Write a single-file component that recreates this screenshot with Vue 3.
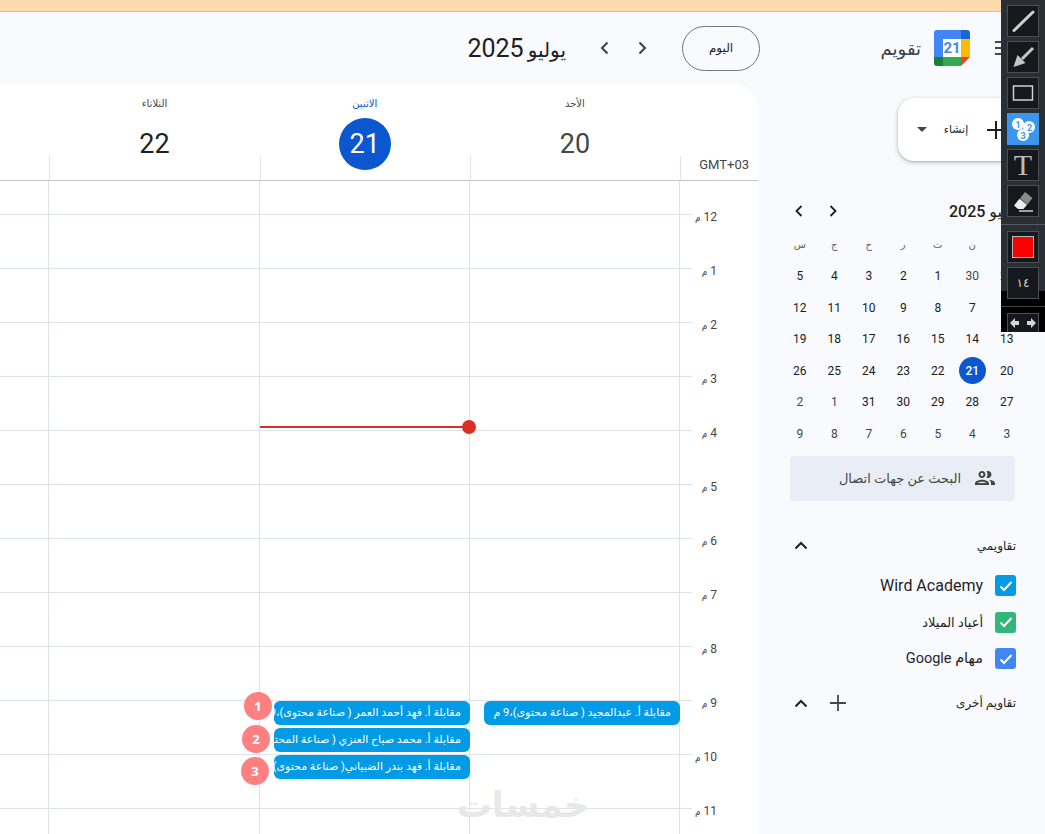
<script setup>
const hours = [12,1,2,3,4,5,6,7,8,9,10,11]
const days = [
  { label: 'الأحد', num: 20, events: [{ text: 'مقابلة أ. عبدالمجيد ( صناعة محتوى)،9 م', top: 520 }] },
  { label: 'الاثنين', num: 21, current: true, now: true, events: [
    { text: 'مقابلة أ. فهد أحمد العمر ( صناعة محتوى)،9 م', top: 520 },
    { text: 'مقابلة أ. محمد صباح العنزي ( صناعة المحتوى)،9:30 م', top: 547 },
    { text: 'مقابلة أ. فهد بندر الضبياني( صناعة محتوى)،10 م', top: 574 }
  ] },
  { label: 'الثلاثاء', num: 22, events: [] },
  { label: 'الأربعاء', num: 23, events: [] }
]
const weekHead = ['ح','ن','ث','ر','خ','ج','س']
const cells = [
  [29,1],[30,1],[1],[2],[3],[4],[5],
  [6],[7],[8],[9],[10],[11],[12],
  [13],[14],[15],[16],[17],[18],[19],
  [20],[21,0,1],[22],[23],[24],[25],[26],
  [27],[28],[29],[30],[31],[1,1],[2,1],
  [3,1],[4,1],[5,1],[6,1],[7,1],[8,1],[9,1]
].map(([n, muted, sel]) => ({ n, muted, sel }))
const calendars = [
  { name: 'Wird Academy', color: '#039be5', size: 16 },
  { name: 'أعياد الميلاد', color: '#33b679', size: 13 },
  { name: 'مهام Google', color: '#4285f4', size: 14.5 }
]
const badges = [
  { n: 1, x: 244, y: 692 },
  { n: 2, x: 242, y: 725 },
  { n: 3, x: 241, y: 757 }
]
</script>

<template>
  <div class="page" dir="rtl">
    <div class="banner"></div>

    <header class="topbar">
      <svg class="burger" width="16" height="14" viewBox="0 0 16 14"><path d="M0 1h16M0 7h16M0 13h16" stroke="#444746" stroke-width="2"/></svg>
      <svg class="logo" width="36" height="36" viewBox="0 0 36 36">
        <path d="M3 0h24v9H9v18H0V3a3 3 0 0 1 3-3z" fill="#4285f4"/>
        <path d="M27 0h6a3 3 0 0 1 3 3v6h-9z" fill="#1967d2"/>
        <path d="M27 9h9v18h-9z" fill="#fbbc04"/>
        <path d="M9 27h18v9H9z" fill="#34a853"/>
        <path d="M0 27h9v9H3a3 3 0 0 1-3-3z" fill="#188038"/>
        <path d="M27 27h9l-9 9z" fill="#ea4335"/>
        <path d="M9 9h18v18H9z" fill="#fff"/>
        <text x="18" y="23" text-anchor="middle" class="logo-num">21</text>
      </svg>
      <div class="app-name">تقويم</div>
      <button class="today-btn">اليوم</button>
      <svg class="nav-chev" width="12" height="14" viewBox="0 0 12 14"><path d="M3.500 1.500 9 7l-5.500 5.500" fill="none" stroke="#3c4043" stroke-width="2"/></svg>
      <svg class="nav-chev" width="12" height="14" viewBox="0 0 12 14"><path d="M8.500 1.500 3 7l5.500 5.500" fill="none" stroke="#3c4043" stroke-width="2"/></svg>
      <div class="period"><span class="period-month">يوليو</span> <span class="period-year">2025</span></div>
    </header>

    <div class="workspace">
      <aside class="side">
        <button class="create">
          <svg class="plus" width="18" height="18" viewBox="0 0 18 18"><path d="M9 0v18M0 9h18" stroke="#1f1f1f" stroke-width="2"/></svg>
          <span class="create-text">إنشاء</span>
          <span class="caret"></span>
        </button>

        <div class="mini-head">
          <span class="mini-title">يوليو 2025</span>
          <span class="mini-navs">
            <svg width="10" height="12" viewBox="0 0 10 12"><path d="M2.500 1 7.500 6l-5 5" fill="none" stroke="#1f1f1f" stroke-width="1.800"/></svg>
            <svg width="10" height="12" viewBox="0 0 10 12"><path d="M7.500 1 2.500 6l5 5" fill="none" stroke="#1f1f1f" stroke-width="1.800"/></svg>
          </span>
        </div>

        <div class="mini-grid">
          <span v-for="w in weekHead" :key="w" class="mini-wk">{{ w }}</span>
          <span v-for="(c, i) in cells" :key="i" class="mini-cell" :class="{ muted: c.muted }">
            <b v-if="c.sel" class="mini-sel">{{ c.n }}</b>
            <template v-else>{{ c.n }}</template>
          </span>
        </div>

        <div class="contacts">
          <svg width="24" height="24" viewBox="0 0 24 24" fill="#444746"><path d="M9 13.750c-2.340 0-7 1.170-7 3.500V19h14v-1.750c0-2.330-4.660-3.500-7-3.500zM4.340 17c.84-.58 2.870-1.250 4.660-1.250s3.820.67 4.660 1.250H4.340zM9 12c1.930 0 3.500-1.570 3.500-3.500S10.930 5 9 5 5.500 6.570 5.500 8.500 7.070 12 9 12zm0-5c.83 0 1.500.67 1.500 1.500S9.830 10 9 10s-1.500-.67-1.500-1.500S8.170 7 9 7zm7.040 6.810c1.160.84 1.960 1.960 1.960 3.440V19h4v-1.750c0-2.020-3.500-3.170-5.960-3.440zM15 12c1.930 0 3.500-1.570 3.500-3.500S16.930 5 15 5c-.54 0-1.040.13-1.500.35.630.89 1 1.980 1 3.150s-.37 2.260-1 3.150c.46.22.96.35 1.500.35z"/></svg>
          <span>البحث عن جهات اتصال</span>
        </div>

        <div class="sec-head mine">
          <span class="sec-title">تقاويمي</span>
          <svg width="14" height="9" viewBox="0 0 14 9"><path d="M1.500 7.500 7 2l5.500 5.500" fill="none" stroke="#1f1f1f" stroke-width="2"/></svg>
        </div>
        <label v-for="c in calendars" :key="c.name" class="cal-row">
          <span class="check" :style="{ background: c.color }">
            <svg width="14" height="12" viewBox="0 0 14 12"><path d="M1.500 6.500 5 10l7.500-8" fill="none" stroke="#fff" stroke-width="2"/></svg>
          </span>
          <span class="cal-name" :style="{ fontSize: c.size + 'px' }">{{ c.name }}</span>
        </label>
        <div class="sec-head other">
          <span class="sec-title">تقاويم أخرى</span>
          <svg class="sec-plus" width="16" height="16" viewBox="0 0 16 16"><path d="M8 0v16M0 8h16" stroke="#444746" stroke-width="1.800"/></svg>
          <svg class="sec-chev" width="14" height="9" viewBox="0 0 14 9"><path d="M1.500 7.500 7 2l5.500 5.500" fill="none" stroke="#1f1f1f" stroke-width="2"/></svg>
        </div>
      </aside>

      <main class="card">
        <div class="card-head">
          <div class="gmt"><span>GMT+03</span></div>
          <div v-for="d in days" :key="d.num" class="day-head" :class="{ current: d.current }">
            <div class="day-label">{{ d.label }}</div>
            <div class="day-num">{{ d.num }}</div>
          </div>
        </div>
        <div class="card-body">
          <div class="gutter">
            <div v-for="h in hours" :key="h" class="hour"><span class="hour-text">{{ h }} <small>م</small></span></div>
          </div>
          <div v-for="d in days" :key="d.num" class="day-col">
            <div v-for="e in d.events" :key="e.text" class="event" :style="{ top: e.top + 'px' }">{{ e.text }}</div>
            <div v-if="d.now" class="now"><i></i></div>
          </div>
        </div>
      </main>
    </div>

    <span v-for="b in badges" :key="b.n" class="badge" :style="{ left: b.x + 'px', top: b.y + 'px' }">{{ b.n }}</span>
    <div class="mark">خمسات</div>

    <nav class="tools">
      <div class="tool"><svg width="24" height="24" viewBox="0 0 24 24"><path d="M3 21.500 22 3" stroke="#cfcfcf" stroke-width="3" stroke-linecap="round"/></svg></div>
      <div class="tool"><svg width="24" height="24" viewBox="0 0 24 24"><path d="M22 3 11 14" stroke="#c4c4c4" stroke-width="3"/><path d="M2.500 22l4-12 8 8z" fill="#c4c4c4"/></svg></div>
      <div class="tool"><svg width="24" height="24" viewBox="0 0 24 24"><rect x="2.500" y="5" width="19" height="14" fill="none" stroke="#cfcfcf" stroke-width="1.500"/></svg></div>
      <div class="tool active"><svg width="26" height="26" viewBox="0 0 26 26" class="num-ico">
        <circle cx="8" cy="8" r="6" fill="#fff"/><circle cx="19" cy="11" r="6" fill="#fff"/><circle cx="13" cy="19" r="6" fill="#fff"/>
        <text x="8" y="11.500" text-anchor="middle">1</text><text x="19.500" y="14.500" text-anchor="middle">2</text><text x="13" y="22.500" text-anchor="middle">3</text>
      </svg></div>
      <div class="tool t-glyph">T</div>
      <div class="tool"><svg width="24" height="24" viewBox="0 0 24 24"><path d="M14 3 21.500 9l-5 6.500-7.500-6z" fill="#8a8a8a"/><path d="M8.500 9.800l7.500 6-3.500 4.200H7l-4-3.500z" fill="#eee"/><path d="M8 22h14" stroke="#cfcfcf" stroke-width="1.500"/></svg></div>
      <div class="tool-sep"></div>
      <div class="tool"><span class="swatch"></span></div>
      <div class="tool size">١٤</div>
      <div class="tool-foot">
        <div class="tool arrows">
          <svg width="26" height="12" viewBox="0 0 26 12" fill="#d5d5d5"><path d="M0 6l5-5v3h4v4H5v3zM26 6l-5-5v3h-4v4h4v3z"/></svg>
        </div>
      </div>
    </nav>
  </div>
</template>

<style>
html, body { margin: 0; background: #f8fafd; }
</style>

<style scoped>
.page {
  position: relative;
  width: 1045px;
  height: 834px;
  overflow: hidden;
  background: #f8fafd;
  color: #1f1f1f;
  font-family: Roboto, "DejaVu Sans", sans-serif;
}
.banner { height: 11px; background: #fdd9ae; border-bottom: 1px solid #e0bd92; }
.topbar { height: 72px; display: flex; align-items: center; padding-right: 34px; }
.burger { flex: none; margin-left: 25px; }
.logo { flex: none; margin-left: 13px; }
.logo-num { font: 700 15px Roboto, sans-serif; fill: #4285f4; }
.app-name { font-size: 18px; width: 39px; white-space: nowrap; margin-left: 122px; color: #3c4043; }
.today-btn {
  width: 78px; height: 45px; flex: none; box-sizing: border-box; margin-left: 34px;
  border: 1px solid #747775; border-radius: 23px; background: transparent;
  font: 12px Roboto, "DejaVu Sans", sans-serif; color: #1f1f1f; padding: 0;
}
.nav-chev { flex: none; margin-left: 25px; }
.period { white-space: nowrap; margin-right: 8px; }
.period-month { font-size: 20px; }
.period-year { font-size: 25px; }

.workspace { display: flex; height: 750px; }
.side { flex: none; width: 287px; box-sizing: border-box; padding-top: 14px; }
.create {
  display: flex; align-items: center; width: 160px; height: 63px; box-sizing: border-box;
  margin-right: -13px; padding: 0 53px 0 0; background: #fff; border: 0; border-radius: 16px;
  box-shadow: 0 1px 3px rgba(60,64,67,.35), 0 2px 6px rgba(60,64,67,.12);
  font: 11px Roboto, "DejaVu Sans", sans-serif; color: #1f1f1f;
}
.plus { flex: none; margin-left: 18px; }
.create-text { width: 26px; white-space: nowrap; margin-left: 16px; }
.caret { width: 0; height: 0; border-left: 5px solid transparent; border-right: 5px solid transparent; border-top: 5px solid #444746; }

.mini-head { display: flex; justify-content: space-between; align-items: center; width: 237px; height: 28px; margin: 36px 25px 4px 0; }
.mini-title { font-size: 16px; font-weight: 500; white-space: nowrap; }
.mini-navs { display: flex; gap: 24px; padding-left: 11px; }
.mini-grid { display: grid; grid-template-columns: repeat(7, 34.5px); grid-auto-rows: 31.500px; margin-right: 21px; }
.mini-wk, .mini-cell { display: flex; align-items: center; justify-content: center; font-size: 12px; font-weight: 400; color: #1a1a1a; }
.mini-wk { font-size: 10px; color: #5f6368; }
.mini-cell.muted { color: #444746; }
.mini-sel { width: 27px; height: 27px; border-radius: 50%; background: #0b57d0; color: #fff; display: flex; align-items: center; justify-content: center; font-weight: 500; }

.contacts {
  display: flex; align-items: center; gap: 12px; width: 225px; height: 45px; box-sizing: border-box;
  margin: 6px 30px 0 0; padding-right: 18px; background: #e9eef6; border-radius: 4px;
  font-size: 13px; color: #444746; white-space: nowrap;
}
.sec-head { display: flex; align-items: center; justify-content: space-between; height: 30px; width: 222px; margin-right: 29px; }
.sec-head.mine { margin-top: 30px; margin-bottom: 7px; }
.sec-head.other { margin-top: 11px; justify-content: flex-start; }
.sec-title { font-size: 12px; white-space: nowrap; color: #1f1f1f; }
.sec-plus { margin-right: auto; }
.sec-chev { margin-right: 22px; }
.cal-row { display: flex; align-items: center; gap: 12px; height: 36.500px; margin-right: 29px; }
.check { width: 21px; height: 21px; border-radius: 3px; display: flex; align-items: center; justify-content: center; }
.cal-name { white-space: nowrap; }

.card { flex: none; width: 920px; background: #fff; border-radius: 0 24px 0 0; }
.card-head { display: flex; height: 97px; box-sizing: border-box; border-bottom: 1px solid #c4c7c5; }
.gmt { flex: none; width: 78px; position: relative; }
.gmt span { position: absolute; right: 9px; top: 73px; font-size: 13px; color: #444746; }
.day-head { flex: none; width: 210.200px; position: relative; text-align: center; }
.day-head::after { content: ""; position: absolute; right: -1px; bottom: 0; height: 24px; border-right: 1px solid #dde3ea; }
.day-label { font-size: 10px; margin-top: 13px; height: 16px; line-height: 14px; color: #444746; }
.day-num { width: 52px; height: 52px; margin: 5px auto 0; border-radius: 50%; display: flex; align-items: center; justify-content: center; font-size: 27px; color: #444746; }
.day-head:nth-child(4) .day-num { color: #1f1f1f; }
.day-head.current .day-label { color: #0b57d0; }
.day-head.current .day-num { background: #0b57d0; color: #fff; }

.card-body { display: flex; height: 653px; overflow: hidden; }
.gutter { flex: none; width: 78px; box-sizing: border-box; padding-top: 33px; }
.hour { height: 54px; position: relative; background: linear-gradient(#dde3ea, #dde3ea) left top / 12px 1px no-repeat; }
.hour-text { position: absolute; right: 41px; top: -4px; font-size: 12px; color: #444746; white-space: nowrap; line-height: 14px; }
.hour-text small { font-size: 9px; }
.day-col {
  flex: none; width: 210.200px; box-sizing: border-box; position: relative;
  border-right: 1px solid #dde3ea;
  background: linear-gradient(#dde3ea 1px, transparent 1px) 0 33px / 100% 54px;
}
.event {
  position: absolute; right: -1px; width: 196px; height: 24px; box-sizing: border-box;
  padding: 0 9px 0 0; border-radius: 6px; background: #039be5; color: #fff;
  font-size: 11px; line-height: 23px; white-space: nowrap; overflow: hidden;
}
.now { position: absolute; right: 0; left: 0; top: 245px; height: 2px; background: #d93025; }
.now i { position: absolute; right: -7px; top: -6px; width: 14px; height: 14px; border-radius: 50%; background: #d93025; }
.badge {
  position: absolute; width: 28px; height: 28px; border-radius: 50%; background: #ff8080; color: #fff;
  display: flex; align-items: center; justify-content: center; font: 700 13px "Open Sans", sans-serif;
}
.mark { position: absolute; left: 455px; top: 785px; width: 136px; text-align: center; font: 700 35px "DejaVu Sans", sans-serif; color: #e8e8e8; white-space: nowrap; }

.tools { position: absolute; right: 0; top: 0; width: 44px; height: 332px; box-sizing: border-box; padding: 5px 6px 0; background: #2a2f36; display: flex; flex-direction: column; gap: 4px; }
.tool { flex: none; width: 32px; height: 32px; box-sizing: border-box; border: 1px solid #4a4f55; background: #15181c; display: flex; align-items: center; justify-content: center; color: #d5d5d5; position: relative; z-index: 1; }
.tool.active { background: #3d96ee; border-color: #3d96ee; }
.num-ico text { font: 700 9px Roboto, sans-serif; fill: #3d96ee; }
.t-glyph { font: 400 30px "Liberation Serif", serif; color: #bdbdbd; }
.tool-sep { height: 1px; background: #555a60; margin: 3px -6px 2px; }
.swatch { width: 20px; height: 20px; background: #f00; border: 1px solid #b9b9b9; }
.size { font-size: 12px; }
.tool-foot { position: absolute; left: 0; right: 0; top: 291px; bottom: 0; background: #000; padding: 22px 6px 0; }
.tool-foot::before { content: ""; position: absolute; left: 0; right: 0; top: 15px; height: 1px; background: #444; }
.arrows { height: 19px; border-bottom: 0; }
</style>
